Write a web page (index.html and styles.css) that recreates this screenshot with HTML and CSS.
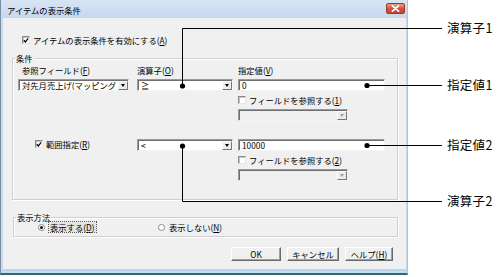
FILE: index.html
```html
<!DOCTYPE html>
<html lang="ja">
<head>
<meta charset="utf-8">
<title>アイテムの表示条件</title>
<link rel="stylesheet" href="styles.css">
</head>
<body>
<div class="stage">
  <div class="dialog">
    <div class="titlebar">
      <span class="title">アイテムの表示条件</span>
      <span class="close"><svg width="9" height="7" viewBox="0 0 9 7"><path d="M1.5 0.8 L7.5 6.2 M7.5 0.8 L1.5 6.2" stroke="#fff" stroke-width="1.8" stroke-linecap="round"/></svg></span>
    </div>
    <div class="client">
      <div class="check enable">
        <span class="box"><svg width="7" height="7" viewBox="0 0 7 7"><path d="M1 3.2 L2.8 5.2 L6 1" stroke="#000" stroke-width="1.4" fill="none"/></svg></span>
        <span>アイテムの表示条件を有効にする(<u>A</u>)</span>
      </div>

      <fieldset class="group cond">
        <legend>条件</legend>
        <div class="cond-grid">
          <span class="lbl col1 row1 ind">参照フィールド(<u>F</u>)</span>
          <span class="lbl col2 row1">演算子(<u>O</u>)</span>
          <span class="lbl col3 row1">指定値(<u>V</u>)</span>

          <div class="combo col1 row2"><span class="val">対先月売上げ(マッピング</span><span class="drop"><i></i></span></div>
          <div class="combo col2 row2"><span class="val">≧</span><span class="drop"><i></i></span></div>
          <div class="edit col3 row2">0</div>

          <div class="check col3 row3">
            <span class="box"></span><span>フィールドを参照する(<u>1</u>)</span>
          </div>
          <div class="combo disabled col3 row4 short"><span class="val"></span><span class="drop"><i></i></span></div>

          <div class="check col1 row6 range">
            <span class="box"><svg width="7" height="7" viewBox="0 0 7 7"><path d="M1 3.2 L2.8 5.2 L6 1" stroke="#000" stroke-width="1.4" fill="none"/></svg></span>
            <span>範囲指定(<u>R</u>)</span>
          </div>
          <div class="combo col2 row6"><span class="val">&lt;</span><span class="drop"><i></i></span></div>
          <div class="edit col3 row6">10000</div>

          <div class="check col3 row7">
            <span class="box"></span><span>フィールドを参照する(<u>2</u>)</span>
          </div>
          <div class="combo disabled col3 row8 short"><span class="val"></span><span class="drop"><i></i></span></div>
        </div>
      </fieldset>

      <fieldset class="group mode">
        <legend>表示方法</legend>
        <div class="radios">
          <div class="radio on"><span class="dot"></span><span class="focus">表示する(<u>D</u>)</span></div>
          <div class="radio"><span class="dot"></span><span>表示しない(<u>N</u>)</span></div>
        </div>
      </fieldset>

      <div class="buttons">
        <span class="button ok">OK</span>
        <span class="button cancel">キャンセル</span>
        <span class="button help">ヘルプ(<u>H</u>)</span>
      </div>
    </div>
  </div>

  <svg class="callouts" width="501" height="277" viewBox="0 0 501 277">
    <g stroke="#000" stroke-width="1" fill="none">
      <path d="M182.5 86 V28.5 H442"/>
      <path d="M367 85.5 H442"/>
      <path d="M367 145.5 H442"/>
      <path d="M182.5 146 V201.5 H442"/>
    </g>
    <g fill="#000">
      <circle cx="182.5" cy="86" r="2.6"/>
      <circle cx="367" cy="85.5" r="2.6"/>
      <circle cx="367" cy="145.5" r="2.6"/>
      <circle cx="182.5" cy="146" r="2.6"/>
    </g>
    <g class="callout-text">
      <text x="447" y="33">演算子1</text>
      <text x="447" y="90">指定値1</text>
      <text x="447" y="150">指定値2</text>
      <text x="447" y="206">演算子2</text>
    </g>
  </svg>
</div>
</body>
</html>
```

FILE: styles.css
```css
* { box-sizing: border-box; }
html, body { margin: 0; background: #fff; }
body {
  font-family: "Noto Sans CJK JP", "Noto Sans", sans-serif;
  font-size: 8.3px;
  line-height: 10px;
  color: #000;
}
u { text-decoration: underline; text-underline-offset: 1px; }

.stage { position: relative; width: 501px; height: 277px; overflow: hidden; }

.dialog {
  width: 408px;
  height: 275px;
  display: flex;
  flex-direction: column;
  background: #c9dbef;
  border-left: 1px solid #7d8ea3;
  border-right: 1px solid #8fcfec;
  border-bottom: 2px solid #2c6a7b;
}

.titlebar {
  height: 18px;
  flex: none;
  display: flex;
  align-items: center;
  justify-content: space-between;
  padding: 0 2px 0 6px;
  background: linear-gradient(#d7e4f3, #c6d8ed);
}
.title { font-size: 8.3px; line-height: 10px; margin-top: 1px; }
.close {
  width: 19px;
  height: 11px;
  margin-top: -2px;
  display: flex;
  align-items: center;
  justify-content: center;
  border: 1px solid #9b3b2d;
  border-radius: 2px;
  background: linear-gradient(#e8a08e, #d2543c 50%, #c4452e);
}

.client {
  flex: 1;
  margin: 0 1px 2px 2px;
  background: #f0f0f0;
  display: flex;
  flex-direction: column;
  border-bottom: 2px solid #b9d6ee;
}

.check { display: flex; align-items: center; gap: 3px; height: 10px; white-space: nowrap; }
.box {
  width: 8px;
  height: 8px;
  flex: none;
  display: flex;
  align-items: center;
  justify-content: center;
  background: #fff;
  border: 1px solid;
  border-color: #8a8a8a #e6e6e6 #e6e6e6 #8a8a8a;
  box-shadow: inset 1px 1px 0 #c4c4c4;
}
.enable { margin: 17px 0 0 19px; }

.group {
  margin: 0;
  border: 1px solid #cfcfcf;
  box-shadow: inset 1px 1px 0 #fff, 1px 1px 0 #fff;
  min-width: 0;
}
.group legend {
  padding: 0 1px;
  margin-left: 2px;
  line-height: 10px;
  height: 10px;
}

.cond { margin: 8px 8px 0 9px; padding: 2px 0 18px 0; }
.cond-grid {
  margin-left: 5px;
  display: grid;
  grid-template-columns: 111px 8px 96px 5px 147px;
  grid-template-rows: 10px 12px 10px 12px 10px 12px 10px 12px;
  row-gap: 4px;
}
.col1 { grid-column: 1; }
.col2 { grid-column: 3; }
.col3 { grid-column: 5; }
.row1 { grid-row: 1; }
.row2 { grid-row: 2; }
.row3 { grid-row: 3; }
.row4 { grid-row: 4; }
.row6 { grid-row: 6; }
.row7 { grid-row: 7; }
.row8 { grid-row: 8; }
.lbl { white-space: nowrap; }
.ind { padding-left: 4px; }
.range { margin-left: 17px; }

.combo, .edit {
  height: 12px;
  display: flex;
  align-items: center;
  background: #fff;
  border: 1px solid;
  border-color: #9a9a9a #f4f4f4 #f4f4f4 #9a9a9a;
  box-shadow: inset 1px 1px 0 #6e6e6e;
  overflow: hidden;
  white-space: nowrap;
  line-height: 10px;
}
.edit { padding-left: 3px; }
.combo .val { flex: 1; padding-left: 3px; overflow: hidden; }
.combo .drop {
  width: 10px;
  height: 9px;
  margin: 1px 0 0 0;
  flex: none;
  display: flex;
  align-items: center;
  justify-content: center;
  background: #ececec;
  border: 1px solid;
  border-color: #fff #777 #777 #fff;
}
.combo .drop i {
  width: 0;
  height: 0;
  border-left: 2.5px solid transparent;
  border-right: 2.5px solid transparent;
  border-top: 3px solid #000;
}
.combo.disabled { background: #f0f0f0; }
.combo.disabled .drop i { border-top-color: #a0a0a0; }
.short { width: 110px; }

.mode { margin: 12px 8px 0 10px; padding: 0 0 4px 0; }
.radios { display: flex; height: 10px; align-items: center; }
.radio { display: flex; align-items: center; gap: 4px; white-space: nowrap; }
.radio:first-child { margin-left: 24px; width: 120px; }
.dot {
  width: 7px;
  height: 7px;
  border-radius: 50%;
  background: #fff;
  border: 1px solid #8c8c8c;
  display: flex;
  align-items: center;
  justify-content: center;
}
.radio.on .dot::after {
  content: "";
  width: 3px;
  height: 3px;
  border-radius: 50%;
  background: #111;
}
.focus { outline: 1px dotted #555; outline-offset: 0; background: #e4e4e4; padding: 0 1px; }

.buttons {
  display: flex;
  justify-content: flex-end;
  gap: 6px;
  margin: 10px 13px 0 0;
}
.button {
  height: 14px;
  display: flex;
  align-items: center;
  justify-content: center;
  background: #f0f0f0;
  border: 1px solid;
  border-color: #fff #6a6a6a #6a6a6a #fff;
  box-shadow: inset -1px -1px 0 #a0a0a0;
  white-space: nowrap;
}
.ok { width: 50px; }
.cancel { width: 52px; }
.help { width: 48px; }

.callouts { position: absolute; left: 0; top: 0; pointer-events: none; }
.callout-text text {
  font-family: "Noto Sans CJK JP", "Noto Sans", sans-serif;
  font-size: 12.5px;
  letter-spacing: 0.3px;
}
```
